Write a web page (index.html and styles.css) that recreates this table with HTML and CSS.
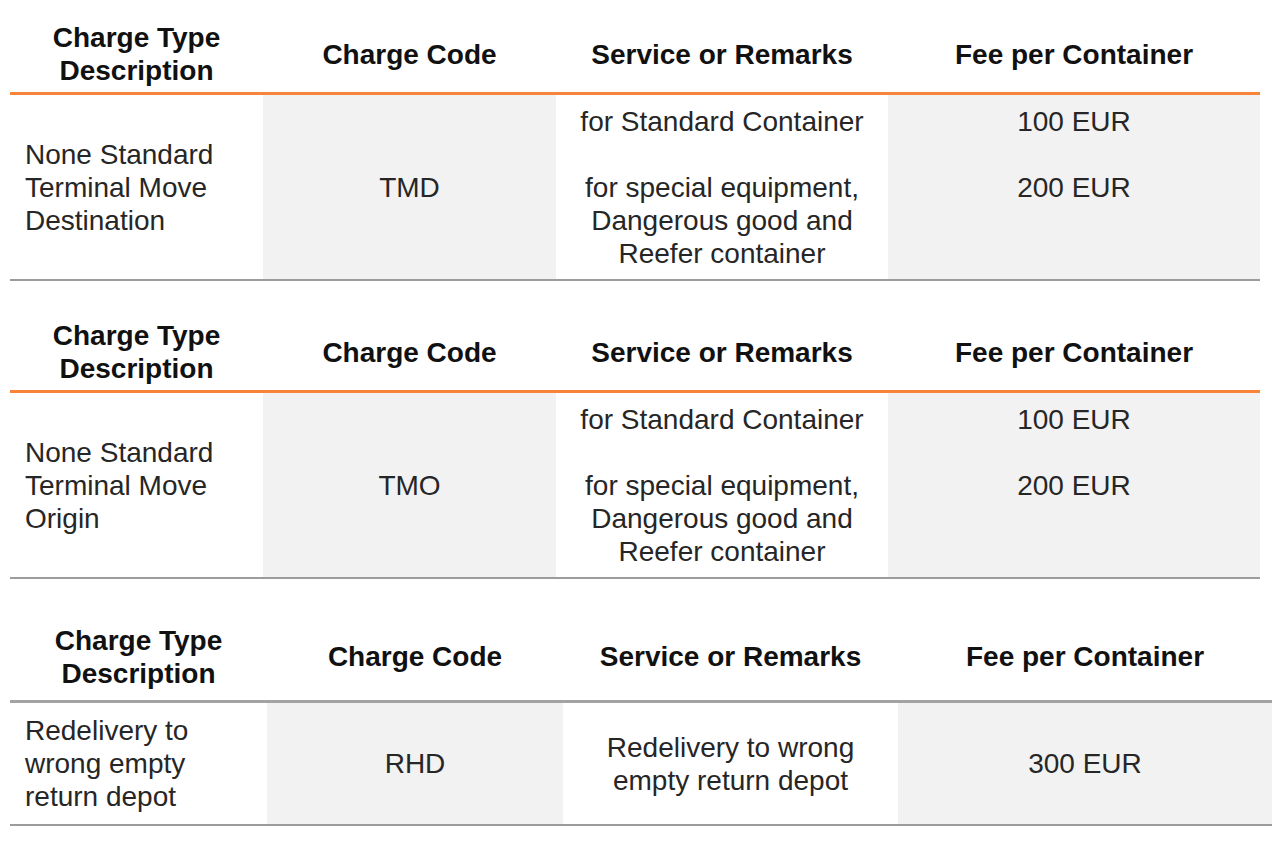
FILE: index.html
```html
<!DOCTYPE html>
<html lang="en">
<head>
<meta charset="utf-8">
<title>Terminal Move Charges</title>
<link rel="stylesheet" href="styles.css">
</head>
<body>
<main class="page">
  <section class="fee-table std">
    <div class="row head orange">
      <div class="cell">Charge Type<br>Description</div>
      <div class="cell">Charge Code</div>
      <div class="cell">Service or Remarks</div>
      <div class="cell">Fee per Container</div>
    </div>
    <div class="row body tall">
      <div class="cell desc">None Standard<br>Terminal Move<br>Destination</div>
      <div class="cell shade">TMD</div>
      <div class="cell top"><p>for Standard Container</p><p>for special equipment,<br>Dangerous good and<br>Reefer container</p></div>
      <div class="cell shade top"><p>100 EUR</p><p>200 EUR</p></div>
    </div>
  </section>

  <section class="fee-table std">
    <div class="row head orange">
      <div class="cell">Charge Type<br>Description</div>
      <div class="cell">Charge Code</div>
      <div class="cell">Service or Remarks</div>
      <div class="cell">Fee per Container</div>
    </div>
    <div class="row body tall">
      <div class="cell desc">None Standard<br>Terminal Move<br>Origin</div>
      <div class="cell shade">TMO</div>
      <div class="cell top"><p>for Standard Container</p><p>for special equipment,<br>Dangerous good and<br>Reefer container</p></div>
      <div class="cell shade top"><p>100 EUR</p><p>200 EUR</p></div>
    </div>
  </section>

  <section class="fee-table wide">
    <div class="row head grey high">
      <div class="cell">Charge Type<br>Description</div>
      <div class="cell">Charge Code</div>
      <div class="cell">Service or Remarks</div>
      <div class="cell">Fee per Container</div>
    </div>
    <div class="row body short">
      <div class="cell desc">Redelivery to<br>wrong empty<br>return depot</div>
      <div class="cell shade">RHD</div>
      <div class="cell">Redelivery to wrong<br>empty return depot</div>
      <div class="cell shade">300 EUR</div>
    </div>
  </section>
</main>
</body>
</html>
```

FILE: styles.css
```css
* { box-sizing: border-box; }

html, body {
  margin: 0;
  padding: 0;
  background: #ffffff;
}

body {
  font-family: "Liberation Sans", Arial, sans-serif;
  font-size: 28px;
  line-height: 33px;
  color: #262626;
}

.page {
  padding: 16px 0 0 10px;
  display: flex;
  flex-direction: column;
  align-items: flex-start;
  gap: 33px;
}

.fee-table.std { width: 1250px; }
.fee-table.wide { width: 1262px; margin-top: 1px; }

.row {
  display: grid;
}

.std .row { grid-template-columns: 253px 293px 332px 372px; }
.wide .row { grid-template-columns: 257px 296px 335px 374px; }

.cell {
  display: flex;
  flex-direction: column;
  align-items: center;
  justify-content: center;
  text-align: center;
}

.cell p { margin: 0; }
.cell p + p { margin-top: 33px; }

.head {
  height: 79px;
  font-weight: bold;
  color: #111111;
}
.head.high { height: 90px; }
.head.orange { border-bottom: 3px solid #f8843a; }
.head.grey { border-bottom: 3px solid #a3a3a3; }

.body { border-bottom: 2px solid #9c9c9c; }
.body.tall { height: 186px; }
.body.short { height: 123px; }

.cell.desc {
  align-items: flex-start;
  text-align: left;
  padding-left: 15px;
}

.cell.top {
  justify-content: flex-start;
  padding-top: 10px;
}

.cell.shade { background: #f2f2f2; }
```
